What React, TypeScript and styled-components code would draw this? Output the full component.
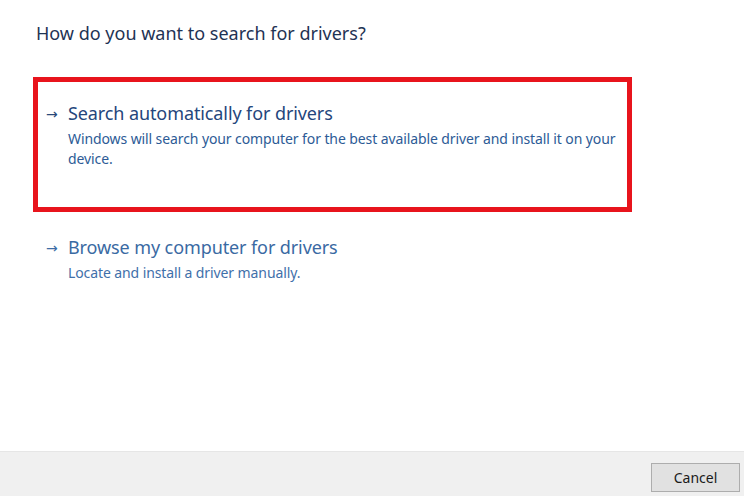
import React from "react";
import styled, { createGlobalStyle } from "styled-components";

const Global = createGlobalStyle`
  html, body { margin: 0; padding: 0; background: #ffffff; }
  body { font-family: "Noto Sans", "Segoe UI", sans-serif; }
`;

const Page = styled.div`
  width: 744px;
  height: 496px;
  display: flex;
  flex-direction: column;
  background: #ffffff;
  overflow: hidden;
`;

const Main = styled.div`
  flex: 1;
  display: flex;
  flex-direction: column;
  padding: 20px 0 0 36px;
`;

const Heading = styled.h1`
  margin: 0;
  font-size: 18px;
  font-weight: 400;
  line-height: 26px;
  color: #1f3354;
  letter-spacing: 0;
`;

const Option = styled.div<{ $highlight?: boolean }>`
  box-sizing: border-box;
  width: 599px;
  height: ${(p) => (p.$highlight ? "135px" : "auto")};
  margin-left: -3px;
  margin-top: ${(p) => (p.$highlight ? "31px" : "0")};
  border: 5px solid ${(p) => (p.$highlight ? "#e8141c" : "transparent")};
  padding: ${(p) => (p.$highlight ? "18px" : "17px")} 0 0 8px;
  display: grid;
  grid-template-columns: 22px 1fr;
  align-items: start;
`;

const Arrow = styled.span<{ $dark?: boolean }>`
  font-size: 14px;
  line-height: 26px;
  padding-top: 1px;
  color: ${(p) => (p.$dark ? "#2b4a7a" : "#3d6da6")};
  font-family: "DejaVu Sans", sans-serif;
`;

const Texts = styled.div`
  display: flex;
  flex-direction: column;
`;

const Title = styled.div<{ $dark?: boolean }>`
  font-size: 18px;
  line-height: 26px;
  color: ${(p) => (p.$dark ? "#24467c" : "#3a6aa3")};
  letter-spacing: -0.1px;
`;

const Desc = styled.div<{ $dark?: boolean }>`
  margin-top: 3px;
  font-size: 14px;
  line-height: 20px;
  color: ${(p) => (p.$dark ? "#2d5b96" : "#3f70aa")};
  letter-spacing: -0.1px;
`;

const Footer = styled.div`
  height: 45px;
  box-sizing: border-box;
  background: #f0f0f0;
  border-top: 1px solid #e6e6e6;
  display: flex;
  justify-content: flex-end;
  align-items: flex-start;
  padding: 11px 4px 0 0;
`;

const CancelButton = styled.button`
  width: 89px;
  height: 29px;
  box-sizing: border-box;
  background: #e1e1e1;
  border: 1px solid #adadad;
  font-family: "Noto Sans", "Segoe UI", sans-serif;
  font-size: 14px;
  color: #1a1a1a;
  padding: 0;
`;

export default function App() {
  return (
    <>
      <Global />
      <Page>
        <Main>
          <Heading>How do you want to search for drivers?</Heading>
          <Option $highlight>
            <Arrow $dark>→</Arrow>
            <Texts>
              <Title $dark>Search automatically for drivers</Title>
              <Desc $dark>
                Windows will search your computer for the best available driver and install it on your
                device.
              </Desc>
            </Texts>
          </Option>
          <Option>
            <Arrow>→</Arrow>
            <Texts>
              <Title>Browse my computer for drivers</Title>
              <Desc>Locate and install a driver manually.</Desc>
            </Texts>
          </Option>
        </Main>
        <Footer>
          <CancelButton>Cancel</CancelButton>
        </Footer>
      </Page>
    </>
  );
}
